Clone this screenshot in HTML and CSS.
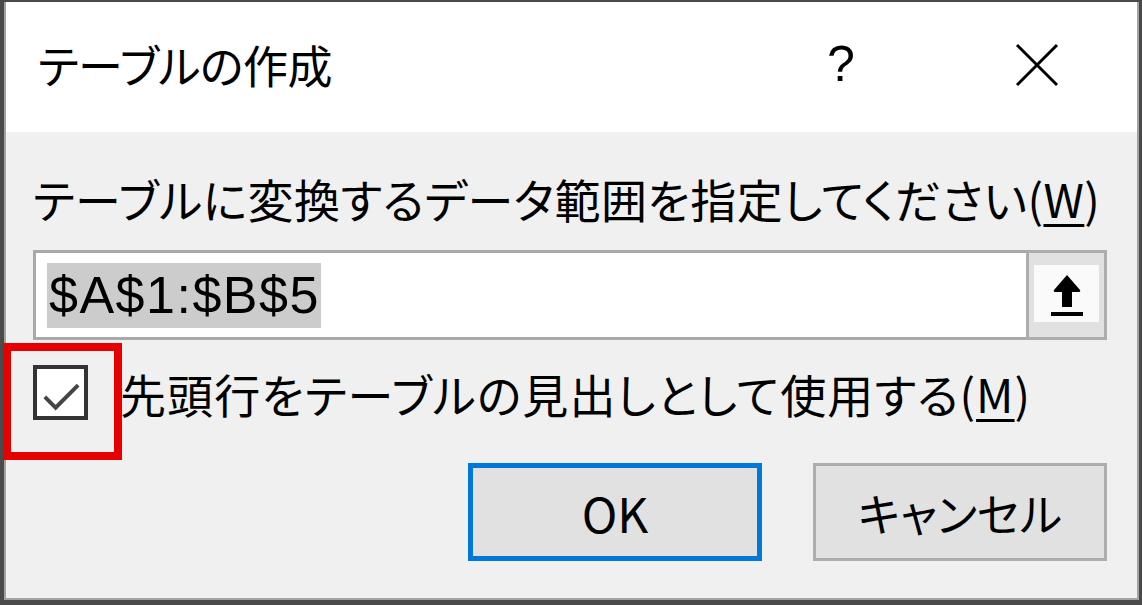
FILE: index.html
```html
<!DOCTYPE html>
<html lang="ja">
<head>
<meta charset="utf-8">
<link rel="stylesheet" href="styles.css">
</head>
<body>
<div class="window">
  <div class="frame">
    <div class="titlebar">
      <div class="title">テーブルの作成</div>
      <div class="help">?</div>
      <div class="close">
        <svg width="44" height="44" viewBox="0 0 44 44"><path d="M2 2 L42 42 M42 2 L2 42" stroke="#000" stroke-width="3" fill="none"/></svg>
      </div>
    </div>
    <div class="content">
      <div class="label">テーブルに変換するデータ範囲を指定してください(<u>W</u>)</div>
      <div class="range">
        <div class="field"><span class="sel">$A$1:$B$5</span></div>
        <div class="pick">
          <div class="pick-inner">
            <svg width="32" height="44" viewBox="0 0 32 44"><path d="M16 3 L29 18 Q30 20 27 20 L21 20 L21 35 L11 35 L11 20 L5 20 Q2 20 3 18 Z" fill="#000"/><rect x="0" y="40" width="32" height="6" fill="#000"/></svg>
          </div>
        </div>
      </div>
      <div class="check-row">
        <div class="checkbox">
          <svg width="48" height="48" viewBox="0 0 48 48"><path d="M8 28 L19 39 L42 16" stroke="#444" stroke-width="4" fill="none"/></svg>
        </div>
        <div class="check-label">先頭行をテーブルの見出しとして使用する(<u>M</u>)</div>
        <div class="mark"></div>
      </div>
      <div class="buttons">
        <div class="btn ok">OK</div>
        <div class="btn">キャンセル</div>
      </div>
    </div>
  </div>
</div>
</body>
</html>
```

FILE: styles.css
```css
html, body {
  margin: 0;
  padding: 0;
  background: #ffffff;
}
.window {
  width: 1142px;
  height: 605px;
  box-sizing: border-box;
  border-top: 2px solid #4a4a4a;
  border-left: 4px solid #4a4a4a;
  border-right: 3px solid #4a4a4a;
  border-bottom: 5px solid #4a4a4a;
  font-family: "Noto Sans CJK JP", "Noto Sans", sans-serif;
  font-feature-settings: "palt";
  color: #000;
}
.frame {
  height: 100%;
  box-sizing: border-box;
  border-left: 2px solid #a2a2a2;
  border-right: 2px solid #a2a2a2;
  border-bottom: 2px solid #a2a2a2;
  display: flex;
  flex-direction: column;
}
.titlebar {
  height: 130px;
  background: #ffffff;
  display: flex;
  align-items: center;
  padding-left: 32px;
}
.title {
  font-size: 45px;
  letter-spacing: -0.5px;
  flex: 1;
  margin-top: -6px;
}
.help {
  font-family: "Liberation Sans", sans-serif;
  font-size: 50px;
  width: 30px;
  margin-right: 158px;
  margin-top: -6px;
}
.close {
  width: 44px;
  height: 44px;
  margin-right: 78px;
  margin-top: -4px;
}
.close svg { display: block; }
.content {
  flex: 1;
  background: #f0f0f0;
  padding: 38px 0 0 27px;
  position: relative;
}
.label {
  font-size: 46px;
  line-height: 56px;
  letter-spacing: 0.5px;
}
.range {
  margin-top: 24px;
  width: 1074px;
  height: 90px;
  box-sizing: border-box;
  border: 3px solid #a8a8a8;
  display: flex;
  background: #ffffff;
}
.field {
  flex: 1;
  display: flex;
  align-items: center;
  padding-left: 11px;
}
.sel {
  background: #cccccc;
  font-family: "Liberation Sans", sans-serif;
  font-size: 52px;
  line-height: 65px;
  letter-spacing: 1.5px;
  padding: 0 1px 0 2px;
}
.pick {
  width: 81px;
  box-sizing: border-box;
  border-left: 3px solid #adadad;
  border-right: 3px solid #adadad;
  background: #e1e1e1;
  padding: 12px 5px 13px 5px;
  margin: -3px -3px -3px 0;
  border-top: 3px solid #adadad;
  border-bottom: 3px solid #adadad;
}
.pick-inner {
  background: #fafafa;
  height: 57px;
  display: flex;
  align-items: center;
  justify-content: center;
}
.pick-inner svg { display: block; }
.check-row {
  display: flex;
  align-items: center;
  margin-top: 25px;
  height: 55px;
}
.checkbox {
  width: 55px;
  height: 55px;
  box-sizing: border-box;
  border: 4px solid #333333;
  background: #ffffff;
  display: flex;
  align-items: center;
  justify-content: center;
}
.checkbox svg { display: block; }
.check-label {
  font-size: 46px;
  letter-spacing: 1.1px;
  margin-left: 32px;
}
.mark {
  position: absolute;
  left: -3px;
  top: 211px;
  width: 119px;
  height: 117px;
  box-sizing: border-box;
  border: 8px solid #e60000;
}
.buttons {
  display: flex;
  justify-content: flex-end;
  gap: 51px;
  margin-top: 43px;
  padding-right: 30px;
}
.btn {
  width: 294px;
  height: 98px;
  box-sizing: border-box;
  border: 3px solid #adadad;
  background: #e1e1e1;
  font-size: 45px;
  display: flex;
  align-items: center;
  justify-content: center;
}
.btn.ok {
  border: 5px solid #0078d7;
  font-size: 48px;
}
u {
  text-decoration-thickness: 3px;
  text-underline-offset: 6px;
}
```
